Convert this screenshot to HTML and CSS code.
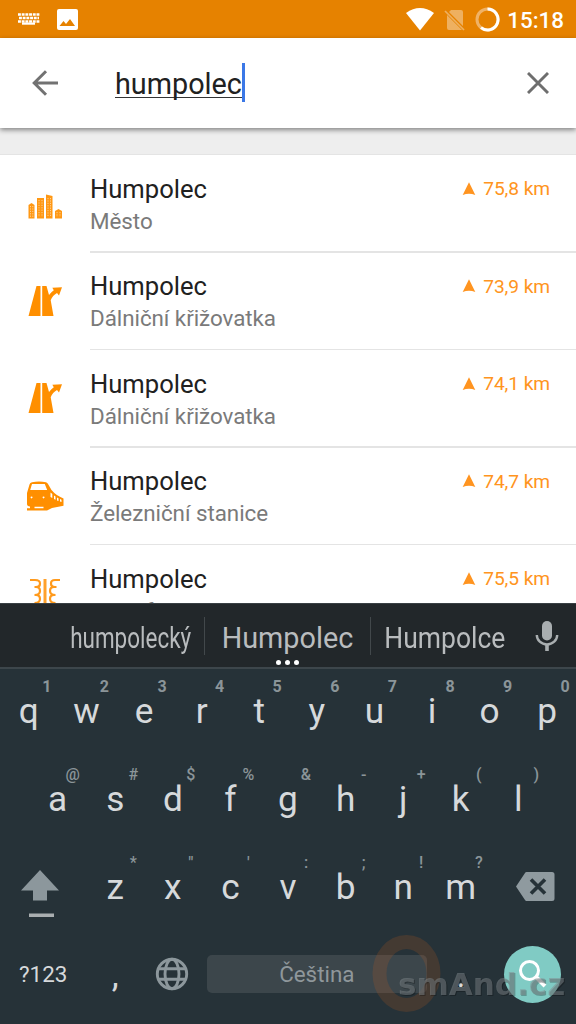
FILE: index.html
```html
<!DOCTYPE html>
<html lang="cs">
<head>
<meta charset="utf-8">
<title>Hledat</title>
<link rel="stylesheet" href="styles.css">
</head>
<body>
<svg class="defs" width="0" height="0">
  <symbol id="road" viewBox="0 0 36 32"><path fill="#ff8f00" d="M9.500 1h4v30H1.500zM15.200 1h4.300l2.500 9q2.500-3.200 4.800-4.700l-1.500-2.500L35 2.200l-3 8.300-2-2.500q-4.500 2.500-6.300 7.200L26.500 31H15.200z"/></symbol>
  <symbol id="arrow" viewBox="0 0 14 14"><path fill="#ff9420" d="M7 .3 13.300 13Q7 10.500.700 13z"/></symbol>
</svg>
<div class="screen">
  <header class="status">
    <svg class="st-kb" width="22" height="12" viewBox="0 0 22 12"><path stroke="#fff" stroke-width="2.300" stroke-dasharray="2.900 .8" d="M0 1.500h22M1 5h20M0 8.500h22"/><path fill="#fff" d="M4 9.500h13v2.200H4z"/></svg>
    <svg class="st-pic" width="21" height="21" viewBox="0 0 21 21"><rect width="21" height="21" rx="2" fill="#fff"/><path fill="#e68200" d="M2.500 17l4-5 2.500 3 4-5 5 7z"/></svg>
    <span class="grow"></span>
    <svg class="st-wifi" width="28" height="23" viewBox="0 0 28 23"><path fill="#fff" d="M0 5Q14-5 28 5L14 22.500z"/></svg>
    <svg class="st-sim" width="21" height="22" viewBox="0 0 21 22"><path fill="#eeb060" d="M7 1h10q2 0 2 2v14L5 3zM3 6l15 15H5q-2 0-2-2z"/><path stroke="#eeb060" stroke-width="1.700" d="M1 2l19 19"/></svg>
    <svg class="st-bat" width="25" height="25" viewBox="0 0 25 25"><circle cx="12.500" cy="12.500" r="10.500" fill="none" stroke="#f0b266" stroke-width="3"/><path fill="none" stroke="#fff" stroke-width="3" d="M12.500 2a10.500 10.500 0 1 1-6.500 18.700"/></svg>
    <span class="clock">15:18</span>
  </header>
  <div class="search">
    <svg class="back" width="26" height="26" viewBox="0 0 26 26"><path fill="none" stroke="#727272" stroke-width="3" d="M26 13H2M14 1.200 2.200 13 14 24.800"/></svg>
    <span class="query">humpolec</span><span class="caret"></span>
    <span class="grow"></span>
    <svg class="clear" width="22" height="22" viewBox="0 0 22 22"><path stroke="#6e6e6e" stroke-width="2.900" d="M1 1l20 20M21 1 1 21"/></svg>
  </div>
  <main class="results">
    <div class="gap"></div>
    <article class="row">
      <div class="icon city"><svg width="36" height="26" viewBox="0 0 36 26"><path fill="#ff9814" d="M.500 11 3.500 9l3 2v13.500h-6zM9 4h7v20.500H9zM18 .500l6.500 1.500v22.500H18zM27 17l3.500-2 3.500 2v7.500h-7z"/><path stroke="#fff" stroke-opacity=".6" stroke-width=".9" stroke-dasharray="1.200 1.200" d="M2.500 12v11M4.800 12v11M11 6v17M14 6v17M20 4v19M22.500 4v19M29 18v5M32 18v5"/></svg></div>
      <div class="info"><div class="line"><div class="names"><div class="name">Humpolec</div><div class="kind">Město</div></div><div class="dist"><svg width="14" height="14"><use href="#arrow"/></svg>75,8 km</div></div><div class="rule"></div></div>
    </article>
    <article class="row">
      <div class="icon"><svg width="36" height="32"><use href="#road"/></svg></div>
      <div class="info"><div class="line"><div class="names"><div class="name">Humpolec</div><div class="kind">Dálniční křižovatka</div></div><div class="dist"><svg width="14" height="14"><use href="#arrow"/></svg>73,9 km</div></div><div class="rule"></div></div>
    </article>
    <article class="row">
      <div class="icon"><svg width="36" height="32"><use href="#road"/></svg></div>
      <div class="info"><div class="line"><div class="names"><div class="name">Humpolec</div><div class="kind">Dálniční křižovatka</div></div><div class="dist"><svg width="14" height="14"><use href="#arrow"/></svg>74,1 km</div></div><div class="rule"></div></div>
    </article>
    <article class="row">
      <div class="icon"><svg width="38" height="30" viewBox="0 0 38 30"><path fill="#ff8f00" fill-rule="evenodd" d="M6 1.300Q13-.3 20 1.300q1.500.5 2 1.700l3.500 6q4.500 5.500 12 8.500v7.300L26 27l-5 2.500H1v-2.200h3V25.500Q1 25 1 23V12L3.500 3.500Q4 1.800 6 1.300zM6 3 4.200 9h17l-2.400-6zM8.500 25.800v1.400h9v-1.400zM5.500 15.500a.9.900 0 1 0 .1 0zM17.500 15.500a.9.900 0 1 0 .1 0zM24.500 11.500v4.500l1.800 1v-4zM28 14.500v3.500l1.500.7v-3.200zM31 16.500v3l1.500.5v-2.800zM34 18v2.500l1.500.5v-2.300z"/></svg></div>
      <div class="info"><div class="line"><div class="names"><div class="name">Humpolec</div><div class="kind">Železniční stanice</div></div><div class="dist"><svg width="14" height="14"><use href="#arrow"/></svg>74,7 km</div></div><div class="rule"></div></div>
    </article>
    <article class="row">
      <div class="icon"><svg width="32" height="32" viewBox="0 0 32 32"><path fill="none" stroke="#ff9a1c" stroke-width="2.200" d="M1 2h5q5 0 5 3.500T7 9h-1.500M7 9q4 0 4 4t-5.500 4M7 17q4 0 4 4t-5.500 4M7 25q4 0 4 5M31 2h-5q-4 0-4 3.500T26 9h1.500M25 9q-4 0-4 4t5.500 4M25 17q-4 0-4 4t5.500 4M25 25q-4 0-4 5"/><path stroke="#ffa12c" stroke-width="3" d="M16 1v31"/></svg></div>
      <div class="info"><div class="line"><div class="names"><div class="name">Humpolec</div><div class="kind">Transformátorová stanice</div></div><div class="dist"><svg width="14" height="14"><use href="#arrow"/></svg>75,5 km</div></div></div>
    </article>
  </main>
  <section class="keyboard">
    <div class="suggest">
      <div class="sug first"><span class="narrow">humpolecký</span></div>
      <div class="sug mid"><span>Humpolec</span><i class="dots"><b></b><b></b><b></b></i></div>
      <div class="sug last"><span class="semi">Humpolce</span></div>
      <svg class="mic" width="24" height="32" viewBox="0 0 24 32"><rect x="7" y="1" width="10" height="19.500" rx="5" fill="#a9aeb0"/><path fill="none" stroke="#a9aeb0" stroke-width="2.400" d="M1.800 15a10.200 9.500 0 0 0 20.400 0"/><path stroke="#a9aeb0" stroke-width="3.600" d="M12 24v7"/></svg>
    </div>
    <div class="keys">
      <div class="krow digits">
        <div class="key">q<sup>1</sup></div><div class="key">w<sup>2</sup></div><div class="key">e<sup>3</sup></div><div class="key">r<sup>4</sup></div><div class="key">t<sup>5</sup></div><div class="key">y<sup>6</sup></div><div class="key">u<sup>7</sup></div><div class="key">i<sup>8</sup></div><div class="key">o<sup>9</sup></div><div class="key">p<sup>0</sup></div>
      </div>
      <div class="krow">
        <div class="key">a<sup class="wide">@</sup></div><div class="key">s<sup>#</sup></div><div class="key">d<sup>$</sup></div><div class="key">f<sup>%</sup></div><div class="key">g<sup>&amp;</sup></div><div class="key">h<sup>-</sup></div><div class="key">j<sup>+</sup></div><div class="key">k<sup>(</sup></div><div class="key">l<sup>)</sup></div>
      </div>
      <div class="krow">
        <div class="edge"><svg class="shift" width="38" height="48" viewBox="0 0 38 48"><path fill="#8c979c" d="M19 0l19 20.500H26v10H12v-10H0z"/><path fill="#a9aeb0" d="M8 43.500h25V47H8z"/></svg></div>
        <div class="key">z<sup>*</sup></div><div class="key">x<sup>"</sup></div><div class="key">c<sup>'</sup></div><div class="key">v<sup>:</sup></div><div class="key">b<sup>;</sup></div><div class="key">n<sup>!</sup></div><div class="key">m<sup>?</sup></div>
        <div class="edge"><svg class="del" width="39" height="29" viewBox="0 0 39 29"><path fill="#8f9a9f" d="M10.500 0H36q2.500 0 2.500 2.500v24Q38.500 29 36 29H10.500q-1 0-1.500-1L0 14.500 9 1q.5-1 1.500-1z"/><path stroke="#263238" stroke-width="3.600" d="M15 7.500l14 14M29 7.500l-14 14"/></svg></div>
      </div>
      <div class="krow bottom">
        <div class="edge sym">?123</div>
        <div class="key comma">,</div>
        <div class="key"><svg class="globe" width="34" height="34" viewBox="0 0 34 34"><g fill="none" stroke="#8c979c" stroke-width="2.900"><circle cx="17" cy="17" r="14.700"/><ellipse cx="17" cy="17" rx="7" ry="14.700"/><path d="M4 11.800h26M4 22.200h26"/></g></svg></div>
        <div class="space">Čeština</div>
        <div class="key dot">.</div>
        <div class="edge"><div class="go"><svg width="30" height="30" viewBox="0 0 30 30"><g fill="none" stroke="#fff"><circle cx="11.500" cy="11.500" r="9" stroke-width="3"/><path stroke-width="4" d="M18 18l9 9"/></g></svg></div></div>
      </div>
    </div>
  </section>
  <div class="mark"><svg width="204" height="80" viewBox="0 0 204 80"><ellipse cx="34.500" cy="39.500" rx="27" ry="31.500" fill="none" stroke="#c0581c" stroke-opacity=".2" stroke-width="14"/><g class="mark-text"><text x="26" y="60.500" fill="#80888b" fill-opacity=".5">smAnd.cz</text></g></svg></div>
</div>
</body>
</html>
```
FILE: styles.css
```css
* { box-sizing: border-box; }
body { margin: 0; font-family: Roboto, "Noto Sans", sans-serif; }
svg { display: block; flex: none; }
.defs { position: absolute; }
.screen { position: relative; width: 576px; height: 1024px; overflow: hidden; display: flex; flex-direction: column; background: #fff; }
.grow { flex: 1; }

.status { flex: none; height: 38px; background: #e68200; display: flex; align-items: center; padding: 0 12px 0 18px; color: #fff; }
.st-pic { margin-left: 17px; }
.st-wifi { margin-right: 10px; }
.st-sim { margin-right: 10px; margin-top: 2px; }
.st-bat { margin-right: 7px; }
.clock { font-size: 22.4px; font-weight: 500; line-height: 38px; padding-top: 1px; }

.search { flex: none; height: 90px; background: #fff; display: flex; align-items: center; padding: 0 27px 0 32px; position: relative; z-index: 1; box-shadow: 0 2px 5px rgba(0,0,0,.45); }
.query { display: block; margin: 1px 0 0 57px; height: 29px; line-height: 31px; font-size: 28.8px; color: #212121; border-bottom: 1.5px solid #333; }
.caret { width: 3.5px; height: 39px; background: #3b78e7; margin-top: -1px; }

.results { height: 475px; flex: none; overflow: hidden; background: #fff; }
.gap { height: 27px; background: #eee; border-bottom: 1px solid #e4e4e4; }
.row { display: flex; height: 97.6px; }
.icon { width: 90px; flex: none; display: flex; align-items: center; justify-content: center; padding-bottom: 1px; }
.city { padding: 7px 0 0 1px; }
.info { flex: 1; display: flex; flex-direction: column; justify-content: space-between; }
.line { display: flex; justify-content: space-between; padding: 17.5px 26px 0 0; }
.name { font-size: 25.6px; line-height: 32px; color: #212121; }
.kind { font-size: 22.4px; line-height: 33px; letter-spacing: -.05px; color: #7a7a7a; white-space: nowrap; }
.dist { display: flex; align-items: center; height: 32px; gap: 7px; font-size: 19.2px; letter-spacing: -.1px; color: #ff9420; white-space: nowrap; }
.rule { height: 1.6px; background: #e4e4e4; }

.keyboard { flex: 1; background: #263238; }
.suggest { height: 64px; background: #22272a; border-top: 1px solid #394044; display: flex; align-items: center; color: #b9bcbe; font-size: 28.8px; }
.sug { height: 38px; line-height: 42px; position: relative; display: flex; justify-content: center; white-space: nowrap; }
.first { width: 205px; justify-content: flex-end; padding-right: 13px; border-right: 1px solid #42484b; }
.mid { width: 166px; border-right: 1px solid #42484b; }
.last { width: 148px; }
.sug span { display: block; }
.narrow { transform: scaleX(.78); transform-origin: right; }
.semi { transform: scaleX(.92); }
.mic { margin-left: 16px; }
.dots { position: absolute; left: 0; right: 0; bottom: -10px; display: flex; gap: 4px; justify-content: center; }
.dots b { width: 5px; height: 5px; border-radius: 50%; background: #fff; }
.keys { box-shadow: inset 0 2px #3d464b; }
.krow { height: 88px; display: flex; justify-content: center; }
.key { width: 57.6px; flex: none; text-align: center; font-size: 35.2px; line-height: 88px; color: #d6d9db; position: relative; }
.key sup { position: absolute; left: 50%; margin-left: 3px; width: 30px; top: 9px; font-size: 16px; line-height: 21px; color: #8b9599; font-weight: 500; }
.key .wide { margin-left: 0; }
.digits sup { font-weight: 700; }
.edge { width: 86.4px; flex: none; display: flex; align-items: center; justify-content: center; }
.shift { margin: 14px 7px 0 0; }
.del { margin: -2px 0 0 5px; }
.bottom { height: 86px; align-items: center; }
.bottom .key { display: flex; justify-content: center; align-items: center; height: 86px; line-height: 86px; }
.globe { margin-right: 1px; }
.sym { font-size: 22.4px; color: #d6d9db; }
.space { width: 220.4px; margin: 0 5px; height: 38px; line-height: 38px; border-radius: 5px; background: #3c464b; color: #8f979b; font-size: 22.4px; text-align: center; flex: none; }
.bottom .comma, .bottom .dot { padding-top: 2px; }
.go { width: 57px; height: 57px; border-radius: 50%; background: #80cbc4; display: flex; align-items: center; justify-content: center; }
.mark { position: absolute; left: 371.5px; top: 934px; }
.mark-text { font: bold 31px "DejaVu Sans", sans-serif; filter: drop-shadow(1px 1px 0 rgba(0,0,0,.5)); }
```
